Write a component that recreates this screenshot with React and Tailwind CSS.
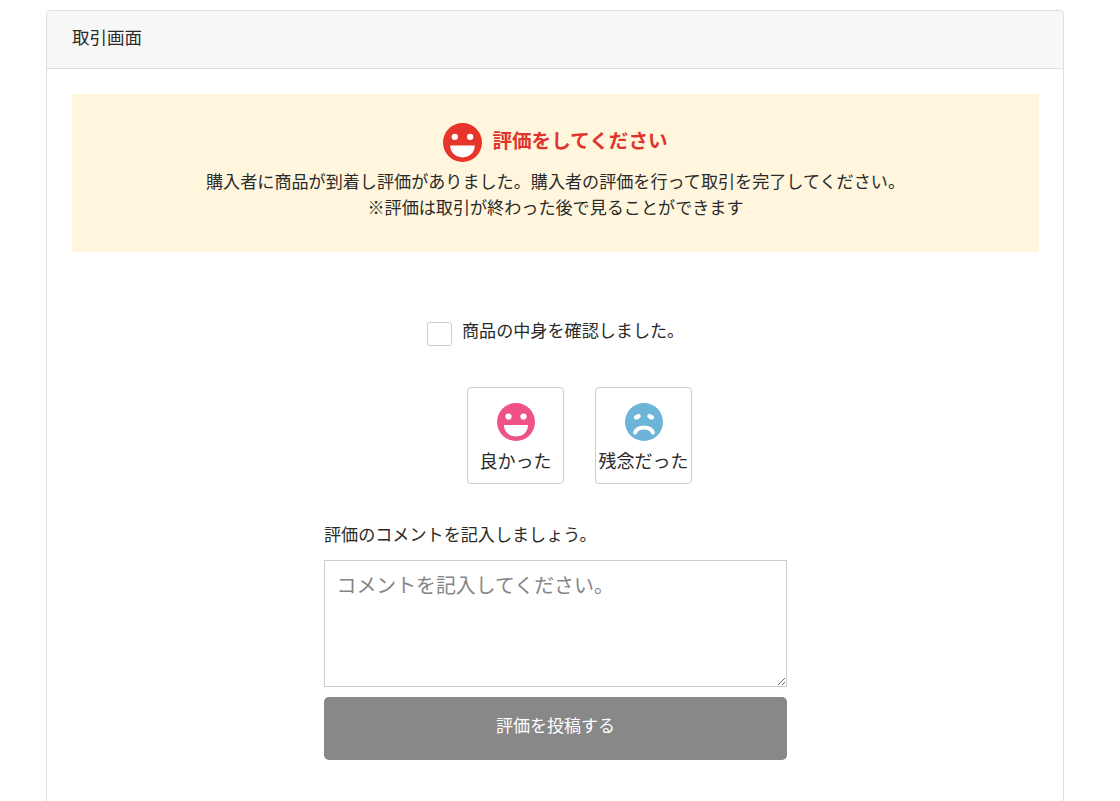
import React from "react";

const FONT = "font-['Meiryo','Noto_Sans_CJK_JP','Noto_Sans_JP',sans-serif]";

const SmileIcon = ({ color, className }) => (
  <svg viewBox="0 0 38 38" className={className}>
    <circle cx="19" cy="19" r="19" fill={color} />
    <circle cx="11.5" cy="13.5" r="3.1" fill="#fff" />
    <circle cx="26.5" cy="13.5" r="3.1" fill="#fff" />
    <path d="M7 22 H31 C31 29 25.5 33.5 19 33.5 C12.5 33.5 7 29 7 22 Z" fill="#fff" />
  </svg>
);

const SadIcon = ({ color, className }) => (
  <svg viewBox="0 0 38 38" className={className}>
    <circle cx="19" cy="19" r="19" fill={color} />
    <ellipse cx="12.3" cy="13.8" rx="3.6" ry="2.3" fill="#fff" transform="rotate(-25 12.3 13.8)" />
    <ellipse cx="25.7" cy="13.8" rx="3.6" ry="2.3" fill="#fff" transform="rotate(25 25.7 13.8)" />
    <path d="M10 29.5 C11.5 26 15 24.5 19 24.5 C23 24.5 26.5 26 28 29.5" fill="none" stroke="#fff" strokeWidth="4" strokeLinecap="round" />
  </svg>
);

const App = () => {
  return (
    <div className={`h-[801px] overflow-hidden bg-white pt-[10px] pl-[46px] text-[#2a2a2a] ${FONT}`}>
      <div className="w-[1018px] h-[900px] rounded-[4px] border border-[#dfdfdf] bg-white">
        <div className="h-[58px] flex items-center px-[25px] pb-[5px] bg-[#f7f7f7] border-b border-[#dfdfdf] rounded-t-[4px] text-[17.5px]">
          取引画面
        </div>

        <div className="pl-[25px] pr-[24px] pt-[25px]">
          <div className="h-[158px] bg-[#fff6dd] flex flex-col items-center pt-[28px] text-[17.1px] leading-[25px]">
            <div className="flex items-center gap-[10px] h-[40px] mb-[6px]">
              <SmileIcon color="#e8352b" className="w-[39px] h-[39px]" />
              <span className="text-[19.6px] font-bold text-[#e0352d] pb-[5px]">評価をしてください</span>
            </div>
            <p>購入者に商品が到着し評価がありました。購入者の評価を行って取引を完了してください。</p>
            <p className="mt-[1px]">※評価は取引が終わった後で見ることができます</p>
          </div>

          <label className="mt-[70px] ml-[355px] flex items-start gap-[10px] text-[17.1px] leading-[16px]">
            <span className="w-[25px] h-[24px] rounded-[3px] border border-[#cccccc] bg-white" />
            <span>商品の中身を確認しました。</span>
          </label>

          <div className="mt-[41px] ml-[395px] flex gap-[31px]">
            <div className="w-[97px] h-[97px] rounded-[4px] border border-[#cccccc] flex flex-col items-center pt-[15px]">
              <SmileIcon color="#ef5285" className="w-[38px] h-[38px]" />
              <span className="mt-[6px] text-[18px] leading-[26px]">良かった</span>
            </div>
            <div className="w-[97px] h-[97px] rounded-[4px] border border-[#cccccc] flex flex-col items-center pt-[15px]">
              <SadIcon color="#6cb4d8" className="w-[38px] h-[38px]" />
              <span className="mt-[6px] text-[18px] leading-[26px] whitespace-nowrap">残念だった</span>
            </div>
          </div>

          <div className="mt-[38px] ml-[252px] w-[463px]">
            <p className="text-[17.1px] leading-[23px]">評価のコメントを記入しましょう。</p>
            <textarea
              placeholder="コメントを記入してください。"
              className="mt-[15px] block w-[463px] h-[127px] border border-[#cccccc] bg-white pl-[11.5px] pr-[12px] py-[7px] text-[19.9px] leading-[34px] outline-none placeholder:text-[#858585]"
            />
            <button className="mt-[10px] w-full h-[63px] rounded-[5px] bg-[#888888] text-white text-[17px] pb-[7px]">
              評価を投稿する
            </button>
          </div>
        </div>
      </div>
    </div>
  );
};

export default App;
